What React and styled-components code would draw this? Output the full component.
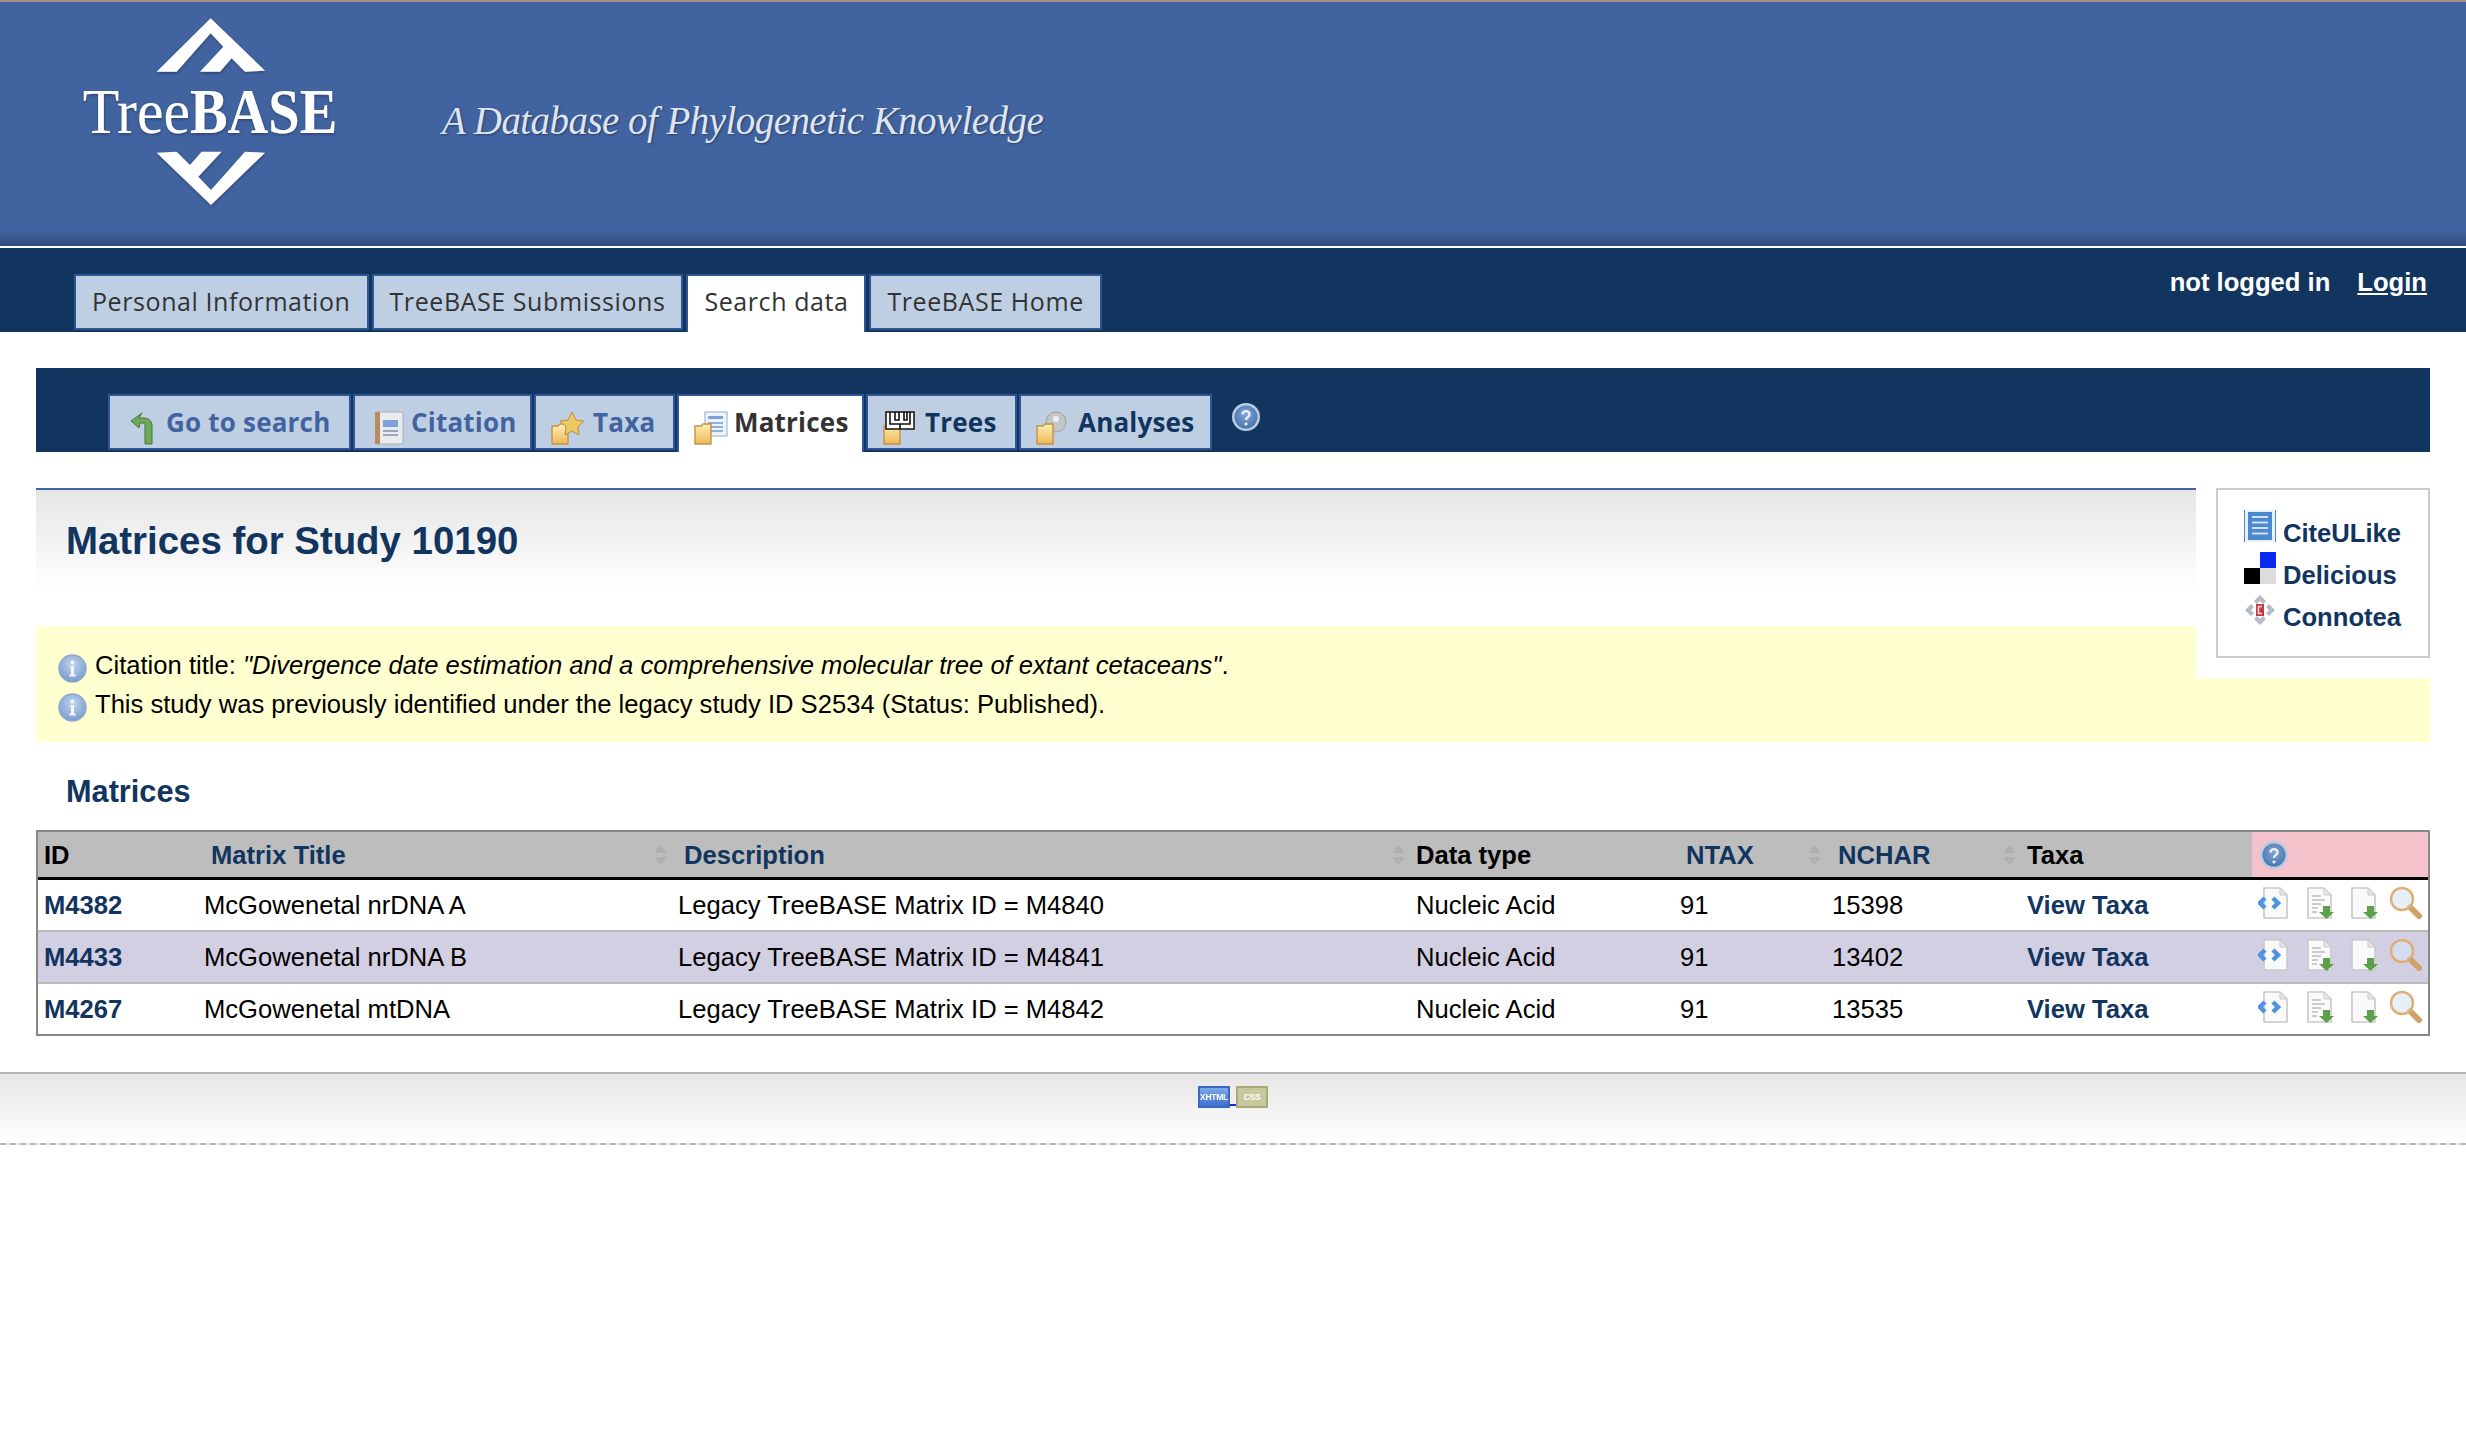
import React from "react";
import styled, { createGlobalStyle } from "styled-components";

const Global = createGlobalStyle`
  html, body { margin: 0; padding: 0; background: #fff; }
  body { font-family: "Liberation Sans", Arial, sans-serif; font-size: 25.6px; color: #000; }
`;

const NAVY = "#11355f";
const BLUE = "#41639f";

const Banner = styled.header`
  height: 244px;
  border-top: 2px solid #a58f8c;
  background: linear-gradient(to bottom, ${BLUE} 0, ${BLUE} 228px, #314c7c 244px);
  display: flex;
  align-items: flex-start;
`;
const LogoBox = styled.svg`
  width: 300px;
  height: 218px;
  margin-left: 60px;
  flex: none;
`;
const Tagline = styled.div`
  margin: 86px 0 0 82px;
  font-family: "Liberation Serif", serif;
  font-style: italic;
  font-size: 39px;
  line-height: 66px;
  color: #dfe5f0;
  text-shadow: 1px 1px 2px rgba(30, 40, 70, .6);
  letter-spacing: -.55px;
  white-space: nowrap;
`;
const TopBar = styled.div`
  margin-top: 2px;
  height: 84px;
  background: ${NAVY};
  display: flex;
  justify-content: space-between;
  align-items: flex-start;
`;
const TopTabs = styled.nav`
  display: flex;
  gap: 3px;
  margin: 26px 0 0 74px;
  height: 58px;
`;
const TopTab = styled.a`
  box-sizing: border-box;
  height: ${p => (p.$active ? "58px" : "56px")};
  padding: 0 16px;
  border: solid #2f5692;
  border-width: 2px 2px ${p => (p.$active ? 0 : "2px")} 2px;
  background: ${p => (p.$active ? "#fff" : "#bfcfe3")};
  color: #333;
  font-family: "Open Sans", sans-serif;
  font-size: 25px;
  line-height: 50px;
  letter-spacing: .58px;
  white-space: nowrap;
`;
const Auth = styled.div`
  display: flex;
  gap: 27px;
  margin: 19px 39px 0 0;
  color: #fff;
  font-weight: 700;
  font-size: 25.6px;
  line-height: 30px;
`;
const AuthLink = styled.a`
  color: #fff;
  text-decoration: underline;
`;
const Main = styled.main`
  padding: 36px 36px 0;
`;
const SubNav = styled.div`
  height: 84px;
  background: ${NAVY};
  display: flex;
  align-items: flex-start;
  padding-left: 72px;
  margin-bottom: 36px;
`;
const SubTabs = styled.nav`
  display: flex;
  gap: 2px;
  margin-top: 26px;
`;
const SubTab = styled.a`
  box-sizing: border-box;
  height: ${p => (p.$active ? "58px" : "56px")};
  width: ${p => p.$w}px;
  padding: 10px 0 0 ${p => p.$pad}px;
  border: solid #2f5692;
  border-width: 2px 2px ${p => (p.$active ? 0 : "2px")} 2px;
  background: ${p => (p.$active ? "#fff" : "#bfcfe3")};
  color: ${p => p.$color};
  font-family: "Open Sans", sans-serif;
  font-weight: 700;
  font-size: 26px;
  line-height: 32px;
  letter-spacing: .2px;
  white-space: nowrap;
  display: flex;
  align-items: flex-start;
`;
const TabIcon = styled.svg`
  width: 34px;
  height: 34px;
  flex: none;
  margin-top: 5px;
  margin-right: ${p => p.$gap || 0}px;
  filter: blur(.4px);
`;
const HelpWrap = styled.span`
  margin: 35px 0 0 20px;
  width: 30px;
  height: 30px;
`;
const SideWrap = styled.aside`
  float: right;
  background: #fff;
  padding: 0 0 20px 20px;
  position: relative;
`;
const SideBox = styled.div`
  box-sizing: border-box;
  width: 214px;
  height: 170px;
  border: 2px solid #ccc;
  padding: 20px 0 0 26px;
  display: flex;
  flex-direction: column;
  gap: 10px;
`;
const SideItem = styled.a`
  display: flex;
  align-items: flex-end;
  gap: 7px;
  height: 32px;
  color: ${NAVY};
  font-weight: 700;
  font-size: 25.6px;
  line-height: 25px;
`;
const Icon32 = styled.svg`
  width: 32px;
  height: 32px;
  flex: none;
`;
const SideLabel = styled.span`
  position: relative;
  top: 4px;
`;
const TitleStrip = styled.div`
  box-sizing: border-box;
  height: 138px;
  border-top: 2px solid ${BLUE};
  padding: 28px 0 0 30px;
  background: linear-gradient(to bottom, #e5e5e5 0, #fff 100px);
`;
const PageTitle = styled.h1`
  margin: 0;
  color: ${NAVY};
  font-size: 38.4px;
  line-height: 46px;
  font-weight: 700;
`;
const Notice = styled.div`
  box-sizing: border-box;
  height: 116px;
  background: #ffffd0;
  padding: 24px 0 0 22px;
`;
const NoticeRow = styled.div`
  display: flex;
  align-items: flex-start;
  gap: 8px;
  height: 39px;
  line-height: 30px;
  font-size: 25.6px;
`;
const NoteIcon = styled.svg`
  width: 29px;
  height: 29px;
  flex: none;
  margin-top: 4px;
  filter: blur(.4px);
`;
const Section = styled.h2`
  margin: 0;
  padding: 32px 0 0 30px;
  height: 56px;
  color: ${NAVY};
  font-size: 30.7px;
  line-height: 36px;
  font-weight: 700;
`;
const Table = styled.table`
  width: 100%;
  table-layout: fixed;
  border-collapse: separate;
  border-spacing: 0;
  border: 2px solid #888;
  font-size: 25.6px;
`;
const Th = styled.th`
  height: 44px;
  padding: 1px 0 0 ${p => p.$pad || 6}px;
  background: ${p => p.$bg || "#bdbdbd"};
  border-bottom: 3px solid #000;
  text-align: left;
  font-weight: 700;
  color: ${p => (p.$link ? NAVY : "#000")};
  font-size: 25.6px;
`;
const ThInner = styled.div`
  display: flex;
  justify-content: space-between;
  align-items: center;
  padding-right: 5px;
`;
const SortMark = styled.svg`
  width: 13px;
  height: 20px;
  flex: none;
`;
const Td = styled.td`
  padding: 1px 0 0 6px;
  height: 49px;
  background: ${p => (p.$alt ? "#d3cfe3" : "#fff")};
  border-bottom: ${p => (p.$last ? 0 : "2px solid #bbb")};
  white-space: nowrap;
`;
const CellLink = styled.a`
  color: ${NAVY};
  font-weight: 700;
`;
const RowIcons = styled.div`
  display: flex;
  gap: 12px;
  margin-top: -6px;
  svg { filter: blur(.5px); }
`;
const Footer = styled.footer`
  box-sizing: border-box;
  margin-top: 36px;
  height: 73px;
  border-top: 2px solid #b5b5b5;
  border-bottom: 2px dashed #b8b8b8;
  background: linear-gradient(to bottom, #e6e6e6, #fff);
  display: flex;
  justify-content: center;
  padding-top: 12px;
`;
const BadgeRow = styled.div`
  display: flex;
  align-items: flex-start;
`;
const Badge = styled.span`
  box-sizing: border-box;
  width: 32px;
  height: 22px;
  border: 2px solid ${p => p.$edge};
  background: ${p => p.$bg};
  color: #fff;
  font-family: "Liberation Sans", sans-serif;
  font-size: 8.5px;
  font-weight: 700;
  line-height: 18px;
  text-align: center;
  white-space: nowrap;
  letter-spacing: -.3px;
  filter: blur(.3px);
`;
const BadgeLink = styled.span`
  width: 6px;
  height: 2px;
  margin-top: 18px;
  background: #1030c8;
`;

const Logo = () => (
  <LogoBox viewBox="0 6 900 654">
    <defs>
      <filter id="ls" x="-5%" y="-5%" width="110%" height="115%">
        <feDropShadow dx="1" dy="4" stdDeviation="3" floodColor="#1d2c4f" floodOpacity=".55" />
      </filter>
    </defs>
    <g filter="url(#ls)" fill="#fff">
      <path d="M452 55 L615 212 L555 215 L515 175 L480 215 L420 215 L490 140 L452 100 L350 215 L290 215 Z" />
      <path d="M453 615 L290 458 L350 455 L390 495 L425 455 L485 455 L415 530 L453 570 L555 455 L615 458 Z" />
      <text x="68" y="400" fontFamily="Liberation Serif, serif" fontSize="190" textLength="322" lengthAdjust="spacingAndGlyphs">Tree</text>
      <text x="390" y="400" fontFamily="Liberation Serif, serif" fontSize="190" fontWeight="700" textLength="442" lengthAdjust="spacingAndGlyphs">BASE</text>
    </g>
  </LogoBox>
);

const Help = ({ size = 28 }) => (
  <svg width={size} height={size} viewBox="0 0 28 28" style={{ display: "block", filter: "blur(.4px)" }}>
    <defs>
      <radialGradient id="hg" cx="50%" cy="40%" r="60%">
        <stop offset="0" stopColor="#86a6d2" />
        <stop offset="1" stopColor="#4a76ae" />
      </radialGradient>
    </defs>
    <circle cx="14" cy="14" r="14" fill="#b9cbe2" />
    <circle cx="14" cy="14" r="11.5" fill="url(#hg)" />
    <path d="M10.5 11.5 C10.5 7 17.5 7 17.5 11.5 C17.5 14 14 14 14 17" fill="none" stroke="#eaf0f8" strokeWidth="2.4" />
    <circle cx="14" cy="21" r="1.6" fill="#eaf0f8" />
  </svg>
);

const Info = () => (
  <NoteIcon viewBox="0 0 29 29">
    <defs>
      <radialGradient id="ig" cx="50%" cy="35%" r="70%">
        <stop offset="0" stopColor="#c2d4ec" />
        <stop offset="1" stopColor="#6f97cb" />
      </radialGradient>
    </defs>
    <circle cx="14.5" cy="14.5" r="13.5" fill="url(#ig)" stroke="#8eaacb" strokeWidth="1.5" />
    <circle cx="14.5" cy="8.5" r="2" fill="#f2f6fb" />
    <path d="M12.5 12h3.6v8.5h1.6v2h-6.4v-2h1.6v-6.5h-.4z" fill="#f2f6fb" />
  </NoteIcon>
);

const FolderDefs = () => (
  <defs>
    <linearGradient id="fg" x1="0" y1="0" x2="0" y2="1">
      <stop offset="0" stopColor="#fdf0b8" />
      <stop offset="1" stopColor="#ebb955" />
    </linearGradient>
  </defs>
);
const Folder = () => (
  <path d="M1 15h6l2-2h8v20H1z" fill="url(#fg)" stroke="#c78f45" strokeWidth="1.4" />
);

const ArrowIcon = () => (
  <TabIcon viewBox="0 0 34 34" $gap={4}>
    <path d="M17 33 H24 V15 C24 9 20 7 15 7 H11 L14 2 L3 10 L11 17 L12 12 H15 C17 12 17 13 17 15 Z" fill="#6fa85a" stroke="#3f7a33" strokeWidth="1" />
  </TabIcon>
);
const NotebookIcon = () => (
  <TabIcon viewBox="0 0 34 34" $gap={5}>
    <rect x="5" y="1" width="26" height="32" fill="#e9ebef" stroke="#a9adb5" />
    <rect x="3" y="1" width="5" height="32" fill="#b98a62" />
    <rect x="11" y="9" width="15" height="7" fill="#7ea2d8" />
    <path d="M11 20h15M11 24h15" stroke="#98a7c0" strokeWidth="2" />
  </TabIcon>
);
const StarFolder = () => (
  <TabIcon viewBox="0 0 34 34" $gap={8}>
    <FolderDefs />
    <Folder />
    <path d="M21 1l4 8 8 1-6 6 1 8-7-4-7 4 1-8-6-6 8-1z" fill="#ecc763" stroke="#bf8f3c" />
  </TabIcon>
);
const DocFolder = () => (
  <TabIcon viewBox="0 0 34 34" $gap={6}>
    <FolderDefs />
    <rect x="11" y="1" width="22" height="24" fill="#eef3fa" stroke="#93aac9" />
    <rect x="14" y="5" width="15" height="3" fill="#7ea2d8" />
    <path d="M14 12h15M14 16h15M14 20h15" stroke="#8fb0dc" strokeWidth="2" />
    <Folder />
  </TabIcon>
);
const TreeFolder = () => (
  <TabIcon viewBox="0 0 34 34" $gap={8}>
    <FolderDefs />
    <Folder />
    <rect x="3" y="1" width="28" height="17" fill="#fff" stroke="#111" strokeWidth="1.5" />
    <path d="M7 1v12h20V1M12 1v8h4V1M21 1v8h3V1M17 13v5" fill="none" stroke="#111" strokeWidth="1.6" />
  </TabIcon>
);
const DiscFolder = () => (
  <TabIcon viewBox="0 0 34 34" $gap={8}>
    <FolderDefs />
    <circle cx="20" cy="11" r="10" fill="#c3c6c9" stroke="#9a9d9f" />
    <circle cx="20" cy="8" r="3" fill="#eef0f2" />
    <Folder />
  </TabIcon>
);

const CiteIcon = () => (
  <Icon32 viewBox="0 0 32 32">
    <rect x="0" y="0" width="32" height="32" fill="#eaf1fa" />
    <path d="M.5 0v32M31.5 0v32" stroke="#4a86cc" />
    <rect x="4" y="2" width="24" height="28" fill="#4a88cf" />
    <path d="M8 7h16M8 12.5h16M8 18h16M8 23.5h16" stroke="#cfe0f4" strokeWidth="2" />
  </Icon32>
);
const DeliciousIcon = () => (
  <Icon32 viewBox="0 0 32 32">
    <rect x="16" y="0" width="16" height="16" fill="#0a28f0" />
    <rect x="0" y="16" width="16" height="16" fill="#000" />
    <rect x="16" y="16" width="16" height="16" fill="#dcdcdc" />
  </Icon32>
);
const ConnoteaIcon = () => (
  <Icon32 viewBox="0 0 32 32">
    <path d="M16 1l6 6-3 3-3-3-3 3-3-3zM16 31l6-6-3-3-3 3-3-3-3 3zM1 16l6-6 3 3-3 3 3 3-3 3zM31 16l-6-6-3 3 3 3-3 3 3 3z" fill="#b4bcc6" />
    <rect x="12" y="10" width="8" height="12" fill="#c8343f" />
    <path d="M18 12.5h-3.5v7H18" fill="none" stroke="#f4dcdc" strokeWidth="1.6" />
  </Icon32>
);

const PageShape = ({ children }) => (
  <Icon32 viewBox="0 0 32 32">
    <path d="M6 1h16l7 7v23H6z" fill="#fafafa" stroke="#c9c9c9" strokeWidth="1.6" />
    <path d="M22 1v7h7z" fill="#e6e6e6" stroke="#c9c9c9" />
    {children}
  </Icon32>
);
const GreenDown = () => <path d="M21 19h7v6h4l-7.5 7L17 25h4z" fill="#5da04c" />;
const XmlIcon = () => (
  <PageShape>
    <path d="M7 11L2 16l5 5M15 11l5 5-5 5" fill="none" stroke="#4f93e0" strokeWidth="4.5" />
  </PageShape>
);
const TextDown = () => (
  <PageShape>
    <path d="M10 9h9M10 13h13M10 17h9M10 21h6M10 25h5" stroke="#bdbdbd" strokeWidth="1.6" />
    <GreenDown />
  </PageShape>
);
const BlankDown = () => (
  <PageShape>
    <GreenDown />
  </PageShape>
);
const Magnifier = () => (
  <Icon32 viewBox="0 0 32 32">
    <path d="M20 20l9 9" stroke="#cfa269" strokeWidth="6" strokeLinecap="round" />
    <circle cx="12" cy="12" r="11" fill="rgba(215,228,246,.6)" stroke="#dcae72" strokeWidth="2.4" />
  </Icon32>
);

const Sort = () => (
  <SortMark viewBox="0 0 13 20">
    <path d="M6.5 0L13 8H0zM6.5 20L0 12h13z" fill="#b0b0b0" />
  </SortMark>
);

const rows = [
  ["M4382", "McGowenetal nrDNA A", "Legacy TreeBASE Matrix ID = M4840", "15398"],
  ["M4433", "McGowenetal nrDNA B", "Legacy TreeBASE Matrix ID = M4841", "13402"],
  ["M4267", "McGowenetal mtDNA", "Legacy TreeBASE Matrix ID = M4842", "13535"],
];

export default function App() {
  return (
    <>
      <Global />
      <Banner>
        <Logo />
        <Tagline>A Database of Phylogenetic Knowledge</Tagline>
      </Banner>
      <TopBar>
        <TopTabs>
          <TopTab>Personal Information</TopTab>
          <TopTab>TreeBASE Submissions</TopTab>
          <TopTab $active>Search data</TopTab>
          <TopTab>TreeBASE Home</TopTab>
        </TopTabs>
        <Auth>
          <span>not logged in</span>
          <AuthLink>Login</AuthLink>
        </Auth>
      </TopBar>
      <Main>
        <SubNav>
          <SubTabs>
            <SubTab $w={243} $pad={18} $color={BLUE}><ArrowIcon />Go to search</SubTab>
            <SubTab $w={179} $pad={17} $color={BLUE}><NotebookIcon />Citation</SubTab>
            <SubTab $w={141} $pad={15} $color={BLUE}><StarFolder />Taxa</SubTab>
            <SubTab $w={187} $pad={15} $active $color="#333"><DocFolder />Matrices</SubTab>
            <SubTab $w={151} $pad={15} $color={NAVY}><TreeFolder />Trees</SubTab>
            <SubTab $w={193} $pad={15} $color={NAVY}><DiscFolder />Analyses</SubTab>
          </SubTabs>
          <HelpWrap><Help /></HelpWrap>
        </SubNav>
        <SideWrap>
          <SideBox>
            <SideItem><CiteIcon /><SideLabel>CiteULike</SideLabel></SideItem>
            <SideItem><DeliciousIcon /><SideLabel>Delicious</SideLabel></SideItem>
            <SideItem><ConnoteaIcon /><SideLabel>Connotea</SideLabel></SideItem>
          </SideBox>
        </SideWrap>
        <TitleStrip>
          <PageTitle>Matrices for Study 10190</PageTitle>
        </TitleStrip>
        <Notice>
          <NoticeRow>
            <Info />
            <span>Citation title: <em>"Divergence date estimation and a comprehensive molecular tree of extant cetaceans"</em>.</span>
          </NoticeRow>
          <NoticeRow>
            <Info />
            <span>This study was previously identified under the legacy study ID S2534 (Status: Published).</span>
          </NoticeRow>
        </Notice>
        <Section>Matrices</Section>
        <Table>
          <colgroup>
            <col style={{ width: 160 }} />
            <col style={{ width: 474 }} />
            <col style={{ width: 738 }} />
            <col style={{ width: 264 }} />
            <col style={{ width: 152 }} />
            <col style={{ width: 195 }} />
            <col style={{ width: 231 }} />
            <col />
          </colgroup>
          <thead>
            <tr>
              <Th>ID</Th>
              <Th $link $pad={13}><ThInner>Matrix Title<Sort /></ThInner></Th>
              <Th $link $pad={12}><ThInner>Description<Sort /></ThInner></Th>
              <Th>Data type</Th>
              <Th $link $pad={12}><ThInner>NTAX<Sort /></ThInner></Th>
              <Th $link $pad={12}><ThInner>NCHAR<Sort /></ThInner></Th>
              <Th>Taxa</Th>
              <Th $bg="#f4c2cb" $pad={8}><Help /></Th>
            </tr>
          </thead>
          <tbody>
            {rows.map((r, i) => {
              const cell = { $alt: i === 1, $last: i === 2 };
              return (
                <tr key={r[0]}>
                  <Td {...cell}><CellLink>{r[0]}</CellLink></Td>
                  <Td {...cell}>{r[1]}</Td>
                  <Td {...cell}>{r[2]}</Td>
                  <Td {...cell}>Nucleic Acid</Td>
                  <Td {...cell}>91</Td>
                  <Td {...cell}>{r[3]}</Td>
                  <Td {...cell}><CellLink>View Taxa</CellLink></Td>
                  <Td {...cell}>
                    <RowIcons>
                      <XmlIcon />
                      <TextDown />
                      <BlankDown />
                      <Magnifier />
                    </RowIcons>
                  </Td>
                </tr>
              );
            })}
          </tbody>
        </Table>
      </Main>
      <Footer>
        <BadgeRow>
          <Badge $bg="linear-gradient(#7fa8e8,#3f6fd0)" $edge="#3a68c0">XHTML</Badge>
          <BadgeLink />
          <Badge $bg="#c9c9a0" $edge="#a9a97a">CSS</Badge>
        </BadgeRow>
      </Footer>
    </>
  );
}
